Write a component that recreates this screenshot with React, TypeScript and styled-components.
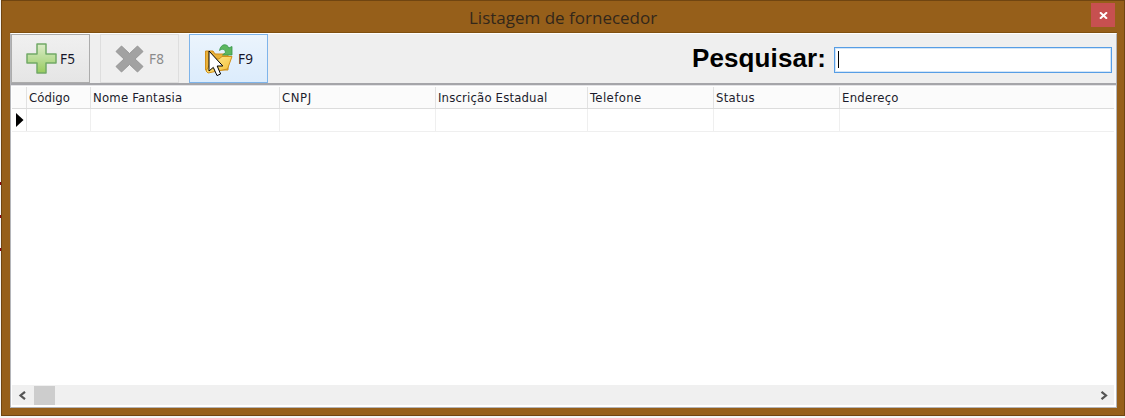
import React from 'react';
import styled, { createGlobalStyle } from 'styled-components';

const GlobalStyle = createGlobalStyle`
  * { box-sizing: border-box; }
  body { margin: 0; background: #f4f4f4; overflow: hidden; }
`;

const Desktop = styled.div`
  position: relative;
  width: 1125px;
  height: 418px;
  padding: 0 0 2px 1px;
  background: #f4f4f4;
`;

const EdgeMark = styled.i<{ $top: number }>`
  position: absolute;
  left: 0;
  top: ${p => p.$top}px;
  width: 1px;
  height: 3px;
  background: #8c0010;
`;

const Window = styled.main`
  width: 1124px;
  height: 416px;
  padding: 0 7px 8px 8px;
  border: 1px solid #704511;
  background: #965f1a;
`;

const TitleBar = styled.header`
  display: grid;
  grid-template-columns: 1fr 24px;
  height: 32px;
  padding-right: 2px;
  border-bottom: 1px solid #80500f;
`;

const Title = styled.h1`
  margin: 0;
  padding: 4px 0 0 459px;
  font: 400 17px/26px "Open Sans", "Noto Sans", sans-serif;
  letter-spacing: 0;
  color: #33271a;
  white-space: nowrap;
`;

const CloseButton = styled.button`
  display: grid;
  place-items: center;
  width: 24px;
  height: 24px;
  margin: 2px 0 0;
  padding: 0 0 0 1px;
  border: 0;
  background: #c75050;
`;

const Client = styled.section`
  display: flex;
  flex-direction: column;
  width: 1107px;
  height: 375px;
  background: #fff;
  border: 1px solid #b4b5b9;
  border-top-color: #fff;
`;

const Toolbar = styled.div`
  display: flex;
  flex: none;
  height: 51px;
  background: #efefef;
  border-bottom: 2px solid #a5a5a9;
`;

const ToolButton = styled.button<{ $kind?: 'disabled' | 'hot' }>`
  position: relative;
  display: flex;
  flex: none;
  align-items: center;
  width: 79px;
  height: 49px;
  margin: 0 10px 0 0;
  padding: 0 0 0 14px;
  gap: 3px;
  font: 13.5px/16px "Noto Sans", sans-serif;
  letter-spacing: 0.3px;
  color: ${p => (p.$kind === 'disabled' ? '#8b8b8b' : '#16162a')};
  border: 1px solid ${p => (p.$kind === 'hot' ? '#7eb4ea' : p.$kind ? '#dedede' : '#acacac')};
  background: ${p =>
    p.$kind === 'hot'
      ? 'linear-gradient(#ebf4fc, #dcecfc)'
      : p.$kind
      ? '#efefef'
      : 'linear-gradient(#f0f0f0, #e5e5e5)'};
`;

const Cursor = styled.svg`
  position: absolute;
  left: 18px;
  top: 15px;
`;

const SearchLabel = styled.label`
  margin: 8px 8px 0 auto;
  font: 700 26px/32px "Liberation Sans", Arial, sans-serif;
  letter-spacing: 0.1px;
  color: #000;
`;

const SearchField = styled.div`
  flex: none;
  width: 278px;
  height: 26px;
  margin: 13px 4px 0 0;
  padding: 3px;
  border: 1px solid #569de5;
  box-shadow: inset 0 0 0 1px #d3e5f7;
  background: #fff;
`;

const Caret = styled.i`
  display: block;
  width: 1px;
  height: 17px;
  background: #000;
`;

const Grid = styled.div`
  display: flex;
  flex-direction: column;
  flex: 1;
  padding: 1px 2px 2px 1px;
  border-top: 1px solid #e3e3e6;
`;

const GridRow = styled.div<{ $head?: boolean }>`
  display: grid;
  grid-template-columns: 15px 64px 189px 156px 152px 126px 126px 1fr;
  flex: none;
  height: ${p => (p.$head ? 22 : 23)}px;
  border-bottom: 1px solid ${p => (p.$head ? '#dcdcdc' : '#efefef')};
  background: ${p => (p.$head ? '#fbfbfb' : '#fff')};
`;

const Cell = styled.div<{ $head?: boolean }>`
  display: flex;
  align-items: center;
  padding-left: 2px;
  border-right: 1px solid ${p => (p.$head ? '#e2e2e2' : '#efefef')};
  font: 13px/18px "DejaVu Sans Condensed", sans-serif;
  font-stretch: condensed;
  white-space: nowrap;
  color: #1b1b2c;
  &:last-child { border-right: 0; }
`;

const ColumnText = styled.span<{ $spacing: number }>`
  letter-spacing: ${p => p.$spacing}px;
`;

const ScrollBar = styled.div`
  display: flex;
  flex: none;
  align-items: center;
  height: 20px;
  margin-top: auto;
  padding: 0 6px;
  background: #f0f0f0;
`;

const Thumb = styled.div`
  width: 21px;
  height: 19px;
  margin: 0 auto 0 8px;
  background: #cdcdcd;
`;

const PlusIcon = () => (
  <svg width="31" height="31" viewBox="0 0 31 31">
    <defs>
      <linearGradient id="plus" x1="0" y1="0" x2="0" y2="1">
        <stop offset="0" stopColor="#dcecc8" />
        <stop offset="0.5" stopColor="#b9dc97" />
        <stop offset="1" stopColor="#98cb5c" />
      </linearGradient>
    </defs>
    <path d="M11 1H20V11H30V20H20V30H11V20H1V11H11Z" fill="url(#plus)" stroke="#71a967" strokeWidth="1.5" strokeLinejoin="round" />
  </svg>
);

const DeleteIcon = () => (
  <svg width="31" height="31" viewBox="0 0 31 31">
    <path d="M6.5 3L14.5 10.6L22.5 3L28 8.5L20.1 16L28 23.5L22.5 29L14.5 21.4L6.5 29L1 23.5L8.9 16L1 8.5Z" fill="#a2a2a2" stroke="#969696" strokeLinejoin="round" />
  </svg>
);

const FolderIcon = () => (
  <svg width="31" height="32" viewBox="0 0 31 32">
    <defs>
      <linearGradient id="folder" x1="0" y1="0" x2="1" y2="1">
        <stop stopColor="#ffed9a" />
        <stop offset="1" stopColor="#f4bd32" />
      </linearGradient>
    </defs>
    <path d="M1.5 8H9L11 11H24V27H1.5Z" fill="#eab23a" stroke="#d08f1c" />
    <path d="M9 16H15L18 13.5H28L23.5 26L4 30L2 28Z" fill="url(#folder)" stroke="#d1921b" strokeLinejoin="round" />
    <path d="M15.5 7.5C17 0 23.5 .5 24.8 5L28 3.5V12H18.5L21.5 9.5C21 6 18.5 5.5 15.5 7.5Z" fill="#5cb75f" stroke="#36964a" strokeWidth=".8" />
  </svg>
);

const columns = [
  { name: 'Código', spacing: 0.05 },
  { name: 'Nome Fantasia', spacing: 0.22 },
  { name: 'CNPJ', spacing: 0.6 },
  { name: 'Inscrição Estadual', spacing: 0.17 },
  { name: 'Telefone', spacing: 0.4 },
  { name: 'Status', spacing: 0.25 },
  { name: 'Endereço', spacing: 0.25 },
];

export default function App() {
  return (
    <>
      <GlobalStyle />
      <Desktop>
        <EdgeMark $top={182} />
        <EdgeMark $top={215} />
        <EdgeMark $top={248} />
        <Window>
          <TitleBar>
            <Title>Listagem de fornecedor</Title>
            <CloseButton aria-label="Fechar">
              <svg width="9" height="7" viewBox="0 0 9 7">
                <path d="M1 .3L8 6.7M8 .3L1 6.7" stroke="#fff" strokeWidth="2" />
              </svg>
            </CloseButton>
          </TitleBar>
          <Client>
            <Toolbar>
              <ToolButton><PlusIcon />F5</ToolButton>
              <ToolButton $kind="disabled" disabled><DeleteIcon />F8</ToolButton>
              <ToolButton $kind="hot">
                <FolderIcon />F9
                <Cursor width="17" height="28" viewBox="0 0 17 28">
                  <path d="M1 1V21L5.3 17.4L9 25.6L12.6 24L9.2 16H14.8Z" fill="#fff" stroke="#000" strokeWidth="1" />
                </Cursor>
              </ToolButton>
              <SearchLabel>Pesquisar:</SearchLabel>
              <SearchField><Caret /></SearchField>
            </Toolbar>
            <Grid>
              <GridRow $head>
                <Cell $head />
                {columns.map(c => (
                  <Cell $head key={c.name}><ColumnText $spacing={c.spacing}>{c.name}</ColumnText></Cell>
                ))}
              </GridRow>
              <GridRow>
                <Cell $head>
                  <svg width="10" height="14" viewBox="0 0 10 14"><path d="M2 0V14L9.5 7Z" fill="#000" /></svg>
                </Cell>
                {columns.map(c => <Cell key={c.name} />)}
              </GridRow>
              <ScrollBar>
                <svg width="8" height="9" viewBox="0 0 8 9"><path d="M7 .8L2.5 4.5L7 8.2" fill="none" stroke="#555" strokeWidth="2.2" /></svg>
                <Thumb />
                <svg width="8" height="9" viewBox="0 0 8 9"><path d="M1.5 .8L6 4.5L1.5 8.2" fill="none" stroke="#555" strokeWidth="2.2" /></svg>
              </ScrollBar>
            </Grid>
          </Client>
        </Window>
      </Desktop>
    </>
  );
}
